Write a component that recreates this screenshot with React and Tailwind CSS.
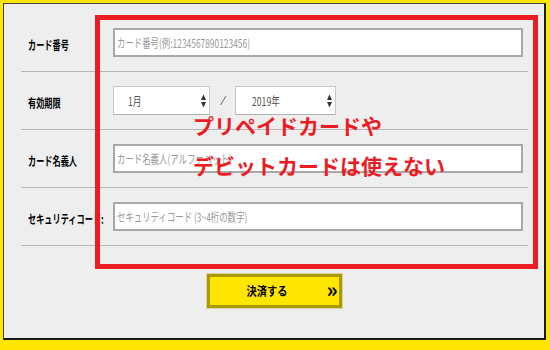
import React from "react";

const FONT = { fontFamily: '"Noto Sans CJK JP", "Noto Sans", sans-serif' };

function Label({ children }) {
  return (
    <div className="w-[92px] shrink-0 pl-[7px] overflow-visible">
      <span className="inline-block origin-left scale-x-[0.68] whitespace-nowrap text-[12px] font-bold leading-none text-black">
        {children}
      </span>
    </div>
  );
}

function Field({ placeholder }) {
  return (
    <div className="flex-1 mr-[5px] h-[29px] bg-white border-2 border-[#a8a8a8] flex items-center pl-[2px] overflow-hidden">
      <span className="inline-block origin-left scale-x-[0.7] whitespace-nowrap text-[12px] leading-none text-[#9a9a9a]">
        {placeholder}
      </span>
    </div>
  );
}

function Arrows() {
  return (
    <svg width="5" height="14" viewBox="0 0 5 14" className="shrink-0">
      <path d="M2.5 0.5 L5 6 L0 6 Z" fill="#333" />
      <path d="M0 8 L5 8 L2.5 13.5 Z" fill="#333" />
    </svg>
  );
}

function Select({ value, w, pl }) {
  return (
    <div className={`${w} h-[29px] bg-white border border-[#c6c6c6] border-b-[#b0b0b0] flex items-center justify-between ${pl} pr-[3px]`}>
      <span className="inline-block origin-left scale-x-[0.72] whitespace-nowrap text-[12px] leading-none text-[#555]">
        {value}
      </span>
      <Arrows />
    </div>
  );
}

export default function App() {
  return (
    <div style={FONT} className="relative w-[550px] h-[350px] bg-[#ffe600] pt-[3px] pl-[3px] pr-[4px] pb-[10px]">
      <div className="h-full bg-[#eeeeee] border-t border-l border-[#444] border-r-2 border-b-2 border-r-[#1a1a1a] border-b-[#1a1a1a] pt-[10px] flex flex-col">
        <div className="ml-[17px] mr-[16px] flex flex-col">
          <div className="h-[58px] flex items-center border-b border-[#b6b6b6]">
            <Label>カード番号</Label>
            <Field placeholder="カード番号(例:1234567890123456)" />
          </div>
          <div className="h-[58px] flex items-center border-b border-[#b6b6b6]">
            <Label>有効期限</Label>
            <Select value="1月" w="w-[97px]" pl="pl-[14px]" />
            <div className="w-[25px] flex justify-center">
              <svg width="8" height="12" viewBox="0 0 8 12">
                <line x1="7" y1="1" x2="1.5" y2="10" stroke="#666" strokeWidth="1" />
              </svg>
            </div>
            <Select value="2019年" w="w-[101px]" pl="pl-[16px]" />
          </div>
          <div className="h-[58px] flex items-center border-b border-[#b6b6b6]">
            <Label>カード名義人</Label>
            <Field placeholder="カード名義人(アルファベット)" />
          </div>
          <div className="h-[58px] flex items-center border-b border-[#b6b6b6]">
            <Label>セキュリティコード:</Label>
            <Field placeholder="セキュリティコード (3~4桁の数字)" />
          </div>
        </div>
        <div className="mt-[27px] mx-auto w-[137px] h-[36px] border border-[#d8d2a0]">
          <div className="w-full h-full bg-[#ffe600] border-[3px] border-[#a89a00] flex items-center relative">
            <div className="flex-1 flex justify-center pr-[14px]">
              <span className="inline-block scale-x-[0.85] whitespace-nowrap text-[12px] font-bold leading-none text-black">
                決済する
              </span>
            </div>
            <span className="absolute right-[1px] top-[2px] text-[21px] font-bold leading-none text-black">»</span>
          </div>
        </div>
      </div>

      <div className="absolute left-[95px] top-[15px] w-[443px] h-[254px] border-[5px] border-[#ec1c24]" />

      <div className="absolute left-[193px] top-[115px] text-[21px] font-bold leading-none text-[#ec1c24] whitespace-nowrap">
        プリペイドカードや
      </div>
      <div className="absolute left-[193px] top-[155px] text-[21px] font-bold leading-none text-[#ec1c24] whitespace-nowrap">
        デビットカードは使えない
      </div>
    </div>
  );
}
